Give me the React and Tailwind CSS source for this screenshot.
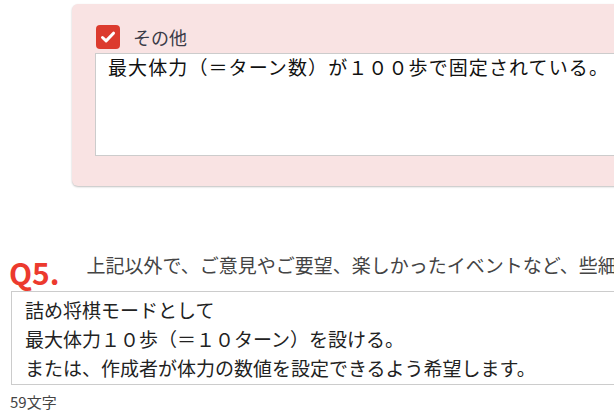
import React from 'react';

const jp = { fontFamily: '"Noto Sans CJK JP", "Noto Sans", sans-serif' };

function CheckIcon() {
    return (
        <svg width="18" height="18" viewBox="0 0 18 18" fill="none">
            <path d="M3.5 9.5l3.6 3.4L14.5 5.2" stroke="#fff" strokeWidth="3" strokeLinecap="round" strokeLinejoin="round" />
        </svg>
    );
}

export default function App() {
    return (
        <div className="w-[614px] h-[416px] overflow-hidden bg-white text-[#333]" style={jp}>
            <div className="w-[760px]">
                {/* Other option panel */}
                <div className="ml-[72px] mt-[4px] h-[182px] rounded-md bg-[#f9e3e3] shadow-[0_1px_2px_rgba(0,0,0,0.25)] pt-[20px] pl-[23px]">
                    <div className="flex items-center h-[25px]">
                        <div className="ml-[1px] w-[24px] h-[24px] rounded-[4px] bg-[#dc3b2e] flex items-center justify-center">
                            <CheckIcon />
                        </div>
                        <span className="ml-[13px] text-[18px] leading-none text-[#3b3b47]">その他</span>
                    </div>
                    <div className="mt-[4px] h-[103px] border border-[#cccccc] bg-white pl-[12px] pt-[1px] text-[19px] tracking-[1.1px] leading-[24px] text-[#111] whitespace-nowrap">
                        最大体力（＝ターン数）が１００歩で固定されている。
                    </div>
                </div>

                {/* Q5 */}
                <div className="mt-[66px] flex items-start h-[38px]">
                    <span className="ml-[9px] mt-[2px] text-[30px] font-bold leading-[36px] text-[#ec3a2e]">Q5.</span>
                    <span className="ml-[27px] text-[19px] leading-[26px] text-[#444] whitespace-nowrap">
                        上記以外で、ご意見やご要望、楽しかったイベントなど、些細なことでも構いませんのでお聞かせください。
                    </span>
                </div>
                <div className="ml-[11px] mt-[1px] h-[94px] border border-[#cccccc] bg-white pl-[13px] pt-[3px] text-[19px] leading-[29px] text-[#222]">
                    <div>詰め将棋モードとして</div>
                    <div>最大体力１０歩（＝１０ターン）を設ける。</div>
                    <div>または、作成者が体力の数値を設定できるよう希望します。</div>
                </div>
                <div className="ml-[10px] mt-[7px] text-[15px] leading-[20px] text-[#444]">59文字</div>
            </div>
        </div>
    );
}
